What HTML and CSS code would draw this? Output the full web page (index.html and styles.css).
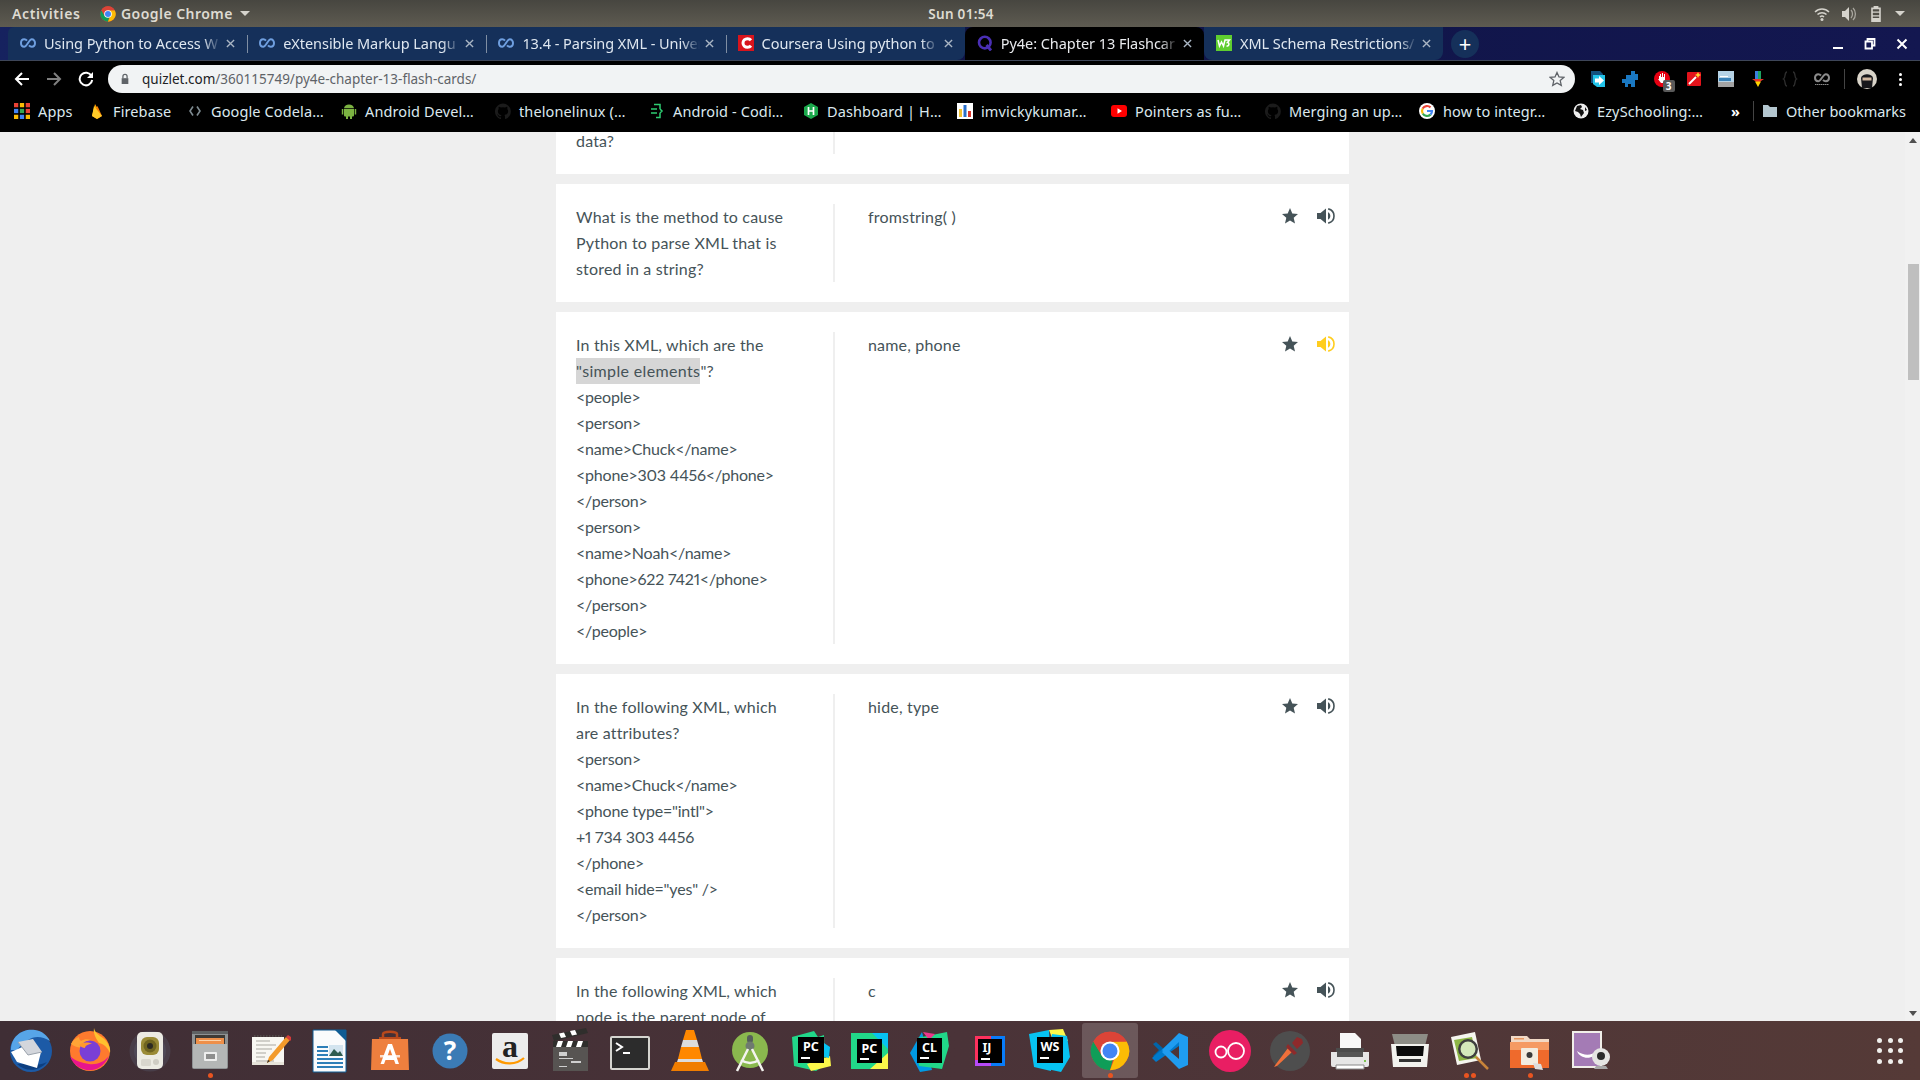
FILE: index.html
```html
<!DOCTYPE html>
<html lang="en">
<head>
<meta charset="utf-8">
<title>Py4e: Chapter 13 Flashcards</title>
<link rel="stylesheet" href="styles.css">
</head>
<body>
<svg class="defs" width="0" height="0">
  <symbol id="co" viewBox="0 0 16 16"><path d="M7 5.600C6.200 4.600 5.200 4.200 4.200 4.200 2.400 4.200 1 5.800 1 8s1.400 3.800 3.200 3.800c2.800 0 4.800-7.600 7.600-7.600C13.600 4.200 15 5.800 15 8s-1.400 3.800-3.200 3.800c-1 0-2-.4-2.800-1.400" fill="none" stroke="currentColor" stroke-width="2"/></symbol>
  <symbol id="gh" viewBox="0 0 16 16"><path fill="currentColor" d="M8 .5a8 8 0 0 0-2.500 15.600c.4.100.5-.2.500-.4v-1.400c-2.200.5-2.700-1-2.700-1-.4-.9-.9-1.200-.9-1.200-.7-.5.100-.5.100-.5.800.1 1.200.8 1.200.8.700 1.200 1.900.9 2.300.7.100-.5.300-.9.500-1.100-1.800-.2-3.600-.9-3.600-4 0-.9.300-1.600.8-2.100-.1-.2-.4-1 .1-2.100 0 0 .7-.2 2.200.8a7.500 7.500 0 0 1 4 0c1.500-1 2.200-.8 2.200-.8.400 1.100.2 1.900.1 2.100.5.600.8 1.300.8 2.100 0 3.100-1.900 3.700-3.700 3.900.3.300.6.800.6 1.500v2.200c0 .2.100.5.600.4A8 8 0 0 0 8 .5z"/></symbol>
  <symbol id="star" viewBox="0 0 16 16"><path fill="currentColor" d="M8 0l2.300 5.400 5.700.5-4.300 3.800 1.300 5.800L8 12.500l-5 3 1.300-5.800L0 5.900l5.700-.5z"/></symbol>
  <symbol id="spk" viewBox="0 0 18 16"><path fill="currentColor" d="M0 5h3.500L9 .5v15L3.500 11H0z"/><path fill="none" stroke="currentColor" stroke-width="1.600" d="M11.200.9c3.600.8 5.800 3.700 5.800 7.100s-2.200 6.300-5.800 7.100"/><path fill="currentColor" d="M11 4.300c1.400.6 2.300 2 2.300 3.700s-.9 3.100-2.300 3.700z"/></symbol>
  <symbol id="chrome" viewBox="0 0 48 48"><circle cx="24" cy="24" r="23" fill="#db4437"/><path fill="#0f9d58" d="M24 47A23 23 0 0 1 4 12.500L15 31l13 1z"/><path fill="#fbbc05" d="M24 47A23 23 0 0 0 44 12.500L24 13l8 13z"/><path fill="#db4437" d="M4 12.500A23 23 0 0 1 44 12.500H24l-9 18z"/><circle cx="24" cy="24" r="11.500" fill="#fff"/><circle cx="24" cy="24" r="9" fill="#4285f4"/></symbol>
  <symbol id="x" viewBox="0 0 10 10"><path stroke="currentColor" stroke-width="1.500" d="M1 1l8 8M9 1l-8 8"/></symbol>
</svg>

<header class="panel">
  <span class="panel-activities">Activities</span>
  <span class="panel-app">
    <svg class="ic14" viewBox="0 0 16 16"><use href="#chrome"/></svg>
    <span>Google Chrome</span>
    <i class="caret"></i>
  </span>
  <span class="panel-clock">Sun 01:54</span>
  <span class="panel-tray">
    <svg class="tray-ic" viewBox="0 0 16 16"><path fill="none" stroke="#d5d3cc" stroke-width="1.500" d="M1 6c4-4 10-4 14 0M3.500 8.500c2.500-2.500 6.500-2.500 9 0M6 11c1.200-1.200 2.800-1.200 4 0"/><circle cx="8" cy="13.500" r="1.500" fill="#d5d3cc"/></svg>
    <svg class="tray-ic" viewBox="0 0 16 16"><path fill="#d5d3cc" d="M1 5h3l4-4v14l-4-4H1z"/><path fill="none" stroke="#a9a79f" stroke-width="1.300" d="M10 4c2 2 2 6 0 8M12 2c3.200 3 3.200 9 0 12"/></svg>
    <svg class="tray-ic" viewBox="0 0 16 20"><path fill="#d5d3cc" d="M5 0h6v2h3v18H2V2h3z"/><path fill="#4f4d46" d="M4 4h8v3H4zM4 8.500h8v3H4zM4 13h8v2H4z"/></svg>
    <i class="caret caret-tray"></i>
  </span>
</header>

<nav class="tabstrip">
  <div class="tab tab-first">
    <svg class="fav co-c"><use href="#co"/></svg>
    <span class="tab-title">Using Python to Access W</span>
    <svg class="tab-x"><use href="#x"/></svg>
  </div>
  <div class="tab tab-sep">
    <svg class="fav co-c"><use href="#co"/></svg>
    <span class="tab-title">eXtensible Markup Langu</span>
    <svg class="tab-x"><use href="#x"/></svg>
  </div>
  <div class="tab tab-sep">
    <svg class="fav co-c"><use href="#co"/></svg>
    <span class="tab-title">13.4 - Parsing XML - Univer</span>
    <svg class="tab-x"><use href="#x"/></svg>
  </div>
  <div class="tab tab-sep tab-before">
    <svg class="fav" viewBox="0 0 16 16"><rect width="16" height="16" fill="#d8141c"/><path fill="none" stroke="#fff" stroke-width="3" d="M13 5.200C12 4 10.800 3.700 9.500 3.700 7 3.700 5 5.500 5 8s2 4.300 4.500 4.300c1.300 0 2.500-.3 3.500-1.500"/></svg>
    <span class="tab-title">Coursera Using python to</span>
    <svg class="tab-x"><use href="#x"/></svg>
  </div>
  <div class="tab tab-active">
    <svg class="fav" viewBox="0 0 16 16"><circle cx="7.800" cy="7.600" r="5.800" fill="none" stroke="#4a2fb5" stroke-width="2.600"/><path stroke="#4a2fb5" stroke-width="2.800" d="M9.500 10l4.500 5.500"/></svg>
    <span class="tab-title">Py4e: Chapter 13 Flashcar</span>
    <svg class="tab-x"><use href="#x"/></svg>
  </div>
  <div class="tab tab-after">
    <svg class="fav" viewBox="0 0 16 16"><rect width="16" height="16" fill="#5fce2f"/><path fill="none" stroke="#fff" stroke-width="1.500" d="M2 5l1.500 6L5.500 7l2 4L9 5h4.500l-2 2.500c2 0 2 4-1 3.500"/></svg>
    <span class="tab-title">XML Schema Restrictions/</span>
    <svg class="tab-x"><use href="#x"/></svg>
  </div>
  <div class="newtab">+</div>
  <div class="winctl">
    <svg class="win-ic" viewBox="0 0 12 12"><path fill="#fff" d="M1 9h10v2H1z"/></svg>
    <svg class="win-ic" viewBox="0 0 12 12"><path fill="none" stroke="#fff" stroke-width="1.800" d="M3.500 3.500V1h7v6.500H8M1.500 3.500h6.500v7H1.500z"/></svg>
    <svg class="win-ic" viewBox="0 0 12 12"><path stroke="#fff" stroke-width="2" d="M1.500 1.500l9 9M10.500 1.500l-9 9"/></svg>
  </div>
</nav>

<div class="toolbar">
  <svg class="tb-ic" viewBox="0 0 16 16"><path fill="none" stroke="#fff" stroke-width="2" d="M15 8H2M8 2L2 8l6 6"/></svg>
  <svg class="tb-ic" viewBox="0 0 16 16"><path fill="none" stroke="#808080" stroke-width="2" d="M1 8h13M8 2l6 6-6 6"/></svg>
  <svg class="tb-ic" viewBox="0 0 16 16"><path fill="none" stroke="#fff" stroke-width="2" d="M13.500 5A6.300 6.300 0 1 0 14.200 9"/><path fill="#fff" d="M15 1v6H9z"/></svg>
  <div class="omnibox">
    <svg class="lock" viewBox="0 0 12 14"><path fill="#5f6368" d="M2 6h8v7H2z"/><path fill="none" stroke="#5f6368" stroke-width="1.500" d="M3.500 6V4a2.500 2.500 0 0 1 5 0v2"/></svg>
    <span class="url"><b>quizlet.com</b>/360115749/py4e-chapter-13-flash-cards/</span>
    <svg class="omni-star" viewBox="0 0 16 16"><path fill="none" stroke="#5f6368" stroke-width="1.300" d="M8 1.500l2 4.500 4.800.4-3.600 3.200 1.100 4.800L8 11.900l-4.300 2.500 1.100-4.800L1.200 6.400 6 6z"/></svg>
  </div>
  <div class="exts">
    <svg class="ext" viewBox="0 0 16 16"><path fill="#14517f" d="M1 0h9l3 3v2H4v7H1z"/><path fill="#22c4ea" d="M3 4h12v12H7l-4-3z"/><path fill="#fff" d="M5 7.500h4V5l5 4.500-5 4.500v-2.500H5z"/></svg>
    <svg class="ext" viewBox="0 0 16 16"><path fill="#1a78c2" d="M9 0h4v3h3v6h-3v7H9v-3H6v3H3v-4H0V8h4V4h5z"/></svg>
    <span class="ext-wrap">
      <svg class="ext" viewBox="0 0 16 16"><circle cx="8" cy="8" r="8" fill="#e60012"/><path fill="#fff" d="M5 5h1V3h1v3h1V2h1v4h1V3h1v6l-1 3H7L4 8h1z"/></svg>
      <span class="ext-badge">3</span>
    </span>
    <svg class="ext" viewBox="0 0 16 16"><rect x="1" y="1" width="14" height="14" rx="1" fill="#e3131b"/><path stroke="#fff" stroke-width="2" d="M3 13l7-7"/><path fill="#ffd233" d="M12 1l1 2 2 1-2 1-1 2-1-2-2-1 2-1z"/></svg>
    <svg class="ext" viewBox="0 0 16 16"><rect width="16" height="16" fill="#b6d3e6"/><rect y="11" width="16" height="5" fill="#a3a3a3"/><rect x="1" y="7" width="12" height="3" fill="#3a82b8"/><path fill="#fff" d="M2 5h8v1H2z"/></svg>
    <svg class="ext" viewBox="0 0 16 16"><path fill="#3b7de0" d="M5 0h3v8H5z"/><path fill="#1da462" d="M8 0h3v8H8z"/><path fill="#e8352b" d="M2 8h12L8 12z"/><path fill="#ffd400" d="M5 10.500h6L8 16z"/></svg>
    <svg class="ext" viewBox="0 0 16 16"><path fill="none" stroke="#2e2e2e" stroke-width="1.300" d="M5 1C2 1 4 7 1.500 8 4 9 2 15 5 15M11 1c3 0 1 6 3.500 7-2.500 1-.5 7-3.500 7"/></svg>
    <svg class="ext ext-co" viewBox="0 0 16 16"><path fill="none" stroke="currentColor" stroke-width="2" d="M7 4.500C6.200 3.600 5.200 3.200 4.200 3.200 2.400 3.200 1 4.800 1 6.800s1.400 3.400 3.200 3.400c2.800 0 4.800-7 7.600-7C13.600 3.200 15 4.800 15 6.800s-1.400 3.400-3.200 3.400c-1 0-2-.4-2.800-1.200"/><path stroke="currentColor" stroke-width="1" stroke-dasharray="1.500 .5" d="M1 13.500h14"/></svg>
    <i class="ext-sep"></i>
    <svg class="avatar" viewBox="0 0 20 20"><circle cx="10" cy="10" r="10" fill="#d9d4c9"/><path fill="#17171b" d="M4 9c1-5 11-5 12 0l-1 10H5z"/><rect x="5.500" y="8.500" width="9" height="3" fill="#d2b89f"/></svg>
    <span class="kebab"><i></i><i></i><i></i></span>
  </div>
</div>

<div class="bookmarks">
  <span class="bm bm-apps"><svg class="fav" viewBox="0 0 15 15"><path fill="#ea4335" d="M0 0h4v4H0z"/><path fill="#fbbc05" d="M5.500 0h4v4h-4z"/><path fill="#ea4335" d="M11 0h4v4h-4z"/><path fill="#4285f4" d="M0 5.500h4v4H0z"/><path fill="#34a853" d="M5.500 5.500h4v4h-4z"/><path fill="#ea4335" d="M11 5.500h4v4h-4z"/><path fill="#fbbc05" d="M0 11h4v4H0z"/><path fill="#4285f4" d="M5.500 11h4v4h-4z"/><path fill="#fbbc05" d="M11 11h4v4h-4z"/></svg>Apps</span>
  <span class="bm bm-fire"><svg class="fav" viewBox="0 0 16 16"><path fill="#ffa000" d="M3 13L6 1l3 5z"/><path fill="#f57c00" d="M3 13L8.500 3 13 13l-5 3z"/><path fill="#ffca28" d="M3 13l2-10 8 10-5 3z"/></svg>Firebase</span>
  <span class="bm"><svg class="fav" viewBox="0 0 16 16"><path fill="none" stroke="#7f8c92" stroke-width="1.600" d="M6 3.500L3 8l3 4.500M10 3.500L13 8l-3 4.500"/></svg>Google Codela…</span>
  <span class="bm"><svg class="fav" viewBox="0 0 16 16"><path fill="#7cb342" d="M3 6h10v6.500a1 1 0 0 1-1 1h-1V16H9v-2.500H7V16H5v-2.500H4a1 1 0 0 1-1-1zM.8 6h1.500v5.500H.8zM13.700 6h1.500v5.500h-1.500zM3 5.200C3.200 3 5.400 1.500 8 1.500s4.800 1.500 5 3.700z"/></svg>Android Devel…</span>
  <span class="bm"><svg class="fav gh-c"><use href="#gh"/></svg>thelonelinux (…</span>
  <span class="bm"><svg class="fav" viewBox="0 0 16 16"><path fill="none" stroke="#2ecc71" stroke-width="1.500" d="M5 1.500h6v4.500M11 10v4.500H7M2 6h6M2 10h6M11 6l2 2-2 2"/></svg>Android - Codi…</span>
  <span class="bm"><svg class="fav" viewBox="0 0 16 16"><path fill="#1ba94c" d="M8 0l7 4v8l-7 4-7-4V4z"/><path stroke="#fff" stroke-width="1.700" d="M5.500 4v8M10.500 4v8M5.500 8h5"/></svg>Dashboard | H…</span>
  <span class="bm"><svg class="fav" viewBox="0 0 16 16"><rect width="16" height="16" fill="#fff"/><rect x="2" y="6" width="3" height="8" fill="#f2c230"/><rect x="6.500" y="2" width="3" height="12" fill="#2a6fc9"/><rect x="11" y="8" width="3" height="6" fill="#d9352b"/></svg>imvickykumar…</span>
  <span class="bm"><svg class="fav" viewBox="0 0 16 16"><rect y="2" width="16" height="12" rx="3" fill="#f00"/><path fill="#fff" d="M6.500 5.300l4.500 2.700-4.500 2.700z"/></svg>Pointers as fu…</span>
  <span class="bm"><svg class="fav gh-c"><use href="#gh"/></svg>Merging an up…</span>
  <span class="bm"><svg class="fav" viewBox="0 0 16 16"><circle cx="8" cy="8" r="8" fill="#fff"/><path fill="none" stroke="#4285f4" stroke-width="2.200" d="M8 8h5a5 5 0 0 1-1.500 3.600"/><path fill="none" stroke="#34a853" stroke-width="2.200" d="M11.500 11.600A5 5 0 0 1 3.700 10.500"/><path fill="none" stroke="#fbbc05" stroke-width="2.200" d="M3.700 10.500a5 5 0 0 1 0-5"/><path fill="none" stroke="#ea4335" stroke-width="2.200" d="M3.700 5.500A5 5 0 0 1 11.500 4.400"/></svg>how to integr…</span>
  <span class="bm"><svg class="fav" viewBox="0 0 16 16"><circle cx="8" cy="8" r="7.500" fill="#eee"/><path fill="#111" d="M4 3l4-1 1 2-2 2 3 1 1 3-3 4-1-3-2-2-3-1zM12 4l2 3-2 1z"/></svg>EzySchooling:…</span>
  <span class="bm-more">»</span>
  <i class="bm-sep"></i>
  <span class="bm bm-other"><svg class="fav" viewBox="0 0 16 16"><path fill="#b3c6cf" d="M1 2h5l2 2h7v10H1z"/></svg>Other bookmarks</span>
</div>

<main class="page">
  <section class="cards">
    <article class="card">
      <div class="term">data?</div>
      <div class="def"></div>
    </article>
    <article class="card">
      <div class="term">What is the method to cause<br>Python to parse XML that is<br>stored in a string?</div>
      <div class="def">fromstring( )</div>
      <div class="actions"><svg class="act-star"><use href="#star"/></svg><svg class="act-spk"><use href="#spk"/></svg></div>
    </article>
    <article class="card">
      <div class="term">In this XML, which are the<br><span class="hl">"simple elements</span>"?<br><span class="xml">&lt;people&gt;<br>&lt;person&gt;<br>&lt;name&gt;Chuck&lt;/name&gt;<br>&lt;phone&gt;303 4456&lt;/phone&gt;<br>&lt;/person&gt;<br>&lt;person&gt;<br>&lt;name&gt;Noah&lt;/name&gt;<br>&lt;phone&gt;622 7421&lt;/phone&gt;<br>&lt;/person&gt;<br>&lt;/people&gt;</span></div>
      <div class="def">name, phone</div>
      <div class="actions"><svg class="act-star"><use href="#star"/></svg><svg class="act-spk act-on"><use href="#spk"/></svg></div>
    </article>
    <article class="card">
      <div class="term">In the following XML, which<br>are attributes?<br><span class="xml">&lt;person&gt;<br>&lt;name&gt;Chuck&lt;/name&gt;<br>&lt;phone type="intl"&gt;<br>+1 734 303 4456<br>&lt;/phone&gt;<br>&lt;email hide="yes" /&gt;<br>&lt;/person&gt;</span></div>
      <div class="def">hide, type</div>
      <div class="actions"><svg class="act-star"><use href="#star"/></svg><svg class="act-spk"><use href="#spk"/></svg></div>
    </article>
    <article class="card">
      <div class="term">In the following XML, which<br>node is the parent node of</div>
      <div class="def">c</div>
      <div class="actions"><svg class="act-star"><use href="#star"/></svg><svg class="act-spk"><use href="#spk"/></svg></div>
    </article>
  </section>
  <aside class="scrollbar">
    <i class="sb-up"></i>
    <i class="sb-thumb"></i>
    <i class="sb-down"></i>
  </aside>
</main>

<footer class="dock">
  <!-- Thunderbird -->
  <div class="dk"><svg viewBox="0 0 50 50"><circle cx="26" cy="25" r="21" fill="#1c5aa6"/><path fill="#57a5e8" d="M6 24C6 10 18 2 30 4c7 1 12 5 15 11-8-5-16-5-22-1-5 3-8 6-11 10z"/><path fill="#0d3f80" d="M12 38c8 8 22 8 30-2-6 3-12 3-16 2z"/><path fill="#fff" d="M6 26l18-8 12 8-4 16-20-6z"/><path fill="#d3d6dc" d="M13 16l15-3 9 13-14 3z"/><path fill="none" stroke="#9aa2ac" stroke-width="1" d="M13 16l10 13 14-3"/></svg></div>
  <!-- Firefox -->
  <div class="dk"><svg viewBox="0 0 50 50"><circle cx="25" cy="25" r="20" fill="#ff7a2e"/><path fill="#ffc12e" d="M29 2c1 5 5 7 9 10 5 4 8 10 7 15-2-5-6-9-11-10-3-5-6-9-5-15z"/><path fill="#ffa436" d="M6 18c2-4 5-6 8-7 0 2 1 3 2 4 3-2 7-2 10-1-4 1-8 3-8 7-4 1-8 0-12-3z"/><path fill="#e8158d" d="M5 30c3 10 13 15 22 14 8-1 14-7 17-14-5 6-12 9-20 8-7-1-14-3-19-8z"/><circle cx="25" cy="25" r="10.500" fill="#7a3fd6"/><path fill="#ff9a2e" d="M14 19c4-3 9-3 13-1-4 0-7 2-7 4-2 0-4-1-6-3z"/></svg></div>
  <!-- Speaker -->
  <div class="dk"><svg viewBox="0 0 50 50"><circle cx="25" cy="25" r="20.500" fill="#5d6577" opacity=".3"/><circle cx="25" cy="25" r="16" fill="#5d6577" opacity=".3"/><rect x="12" y="6" width="26" height="37" rx="5" fill="#ecebe3"/><rect x="16" y="11" width="18" height="18" rx="6" fill="#9a8b36"/><circle cx="25" cy="20" r="6.500" fill="#6f6420"/><circle cx="25" cy="20" r="3" fill="#2c2a22"/><circle cx="31" cy="36" r="3" fill="#cfcdc4"/><rect x="16" y="33" width="10" height="7" rx="1.500" fill="#d8d6cd"/></svg></div>
  <!-- Files -->
  <div class="dk dk-dot"><svg viewBox="0 0 50 50"><rect x="7" y="5" width="36" height="38" rx="2" fill="#8f9294"/><rect x="7" y="5" width="36" height="3" fill="#5f6163"/><rect x="10" y="9" width="30" height="9" fill="#3e3a36"/><rect x="11" y="12" width="28" height="6" fill="#ee8f4a"/><rect x="14" y="14" width="22" height="1" fill="#fbd3ac"/><rect x="8" y="18" width="34" height="24" fill="#b4b6b6"/><rect x="19" y="26" width="13" height="9" rx="1" fill="#eeeeee"/><rect x="21" y="28" width="9" height="5" fill="#8e8e8e"/></svg></div>
  <!-- Notes -->
  <div class="dk"><svg viewBox="0 0 50 50"><rect x="7" y="11" width="32" height="28" fill="#e7e4da"/><path fill="#f8f7f2" d="M7 11h32v25H7z"/><path fill="none" stroke="#55534e" stroke-width="1.500" stroke-dasharray="1.500 1.500" d="M9 10h28"/><path fill="none" stroke="#a9a7a0" stroke-width="1" d="M11 15h14M11 19h20M11 23h16M11 27h10M11 31h9M11 35h18"/><path fill="#f39b2b" d="M41 11l4 3-17 20-6 3 2-6z"/><path fill="#d63a3a" d="M41 11l2-2 3 2 0 3-1 1z"/><path fill="#2b2b2b" d="M22 37l1-3 2 1z"/></svg></div>
  <!-- Writer -->
  <div class="dk"><svg viewBox="0 0 50 50"><path fill="#fafbfc" stroke="#0f5c94" stroke-width="1" d="M8 4h33v42H8z"/><path fill="#0f5c94" d="M30 4h11v11z"/><path fill="#2e7fb8" d="M12 20h11v2H12zM12 24h11v2H12zM12 28h11v2H12zM12 32h26v2H12zM12 36h26v2H12zM12 40h26v2H12z"/><path fill="#d3e4ef" d="M24 19h14v11H24z"/><path fill="#2f5d50" d="M24 30l5-7 4 4 2-2 3 5z"/></svg></div>
  <!-- Store -->
  <div class="dk"><svg viewBox="0 0 50 50"><path fill="none" stroke="#b9491c" stroke-width="2.500" d="M18 13V8c0-3 14-3 14 0v5"/><path fill="#b9491c" d="M14 11h22v3H14z"/><path fill="#ee7f3e" d="M7 13h36l1 31H6z"/><path fill="#fff" d="M23 18h4l7 20h-3.500l-1.500-4h-8.500L19 38h-3.500zM22.500 30h5L25 23z"/><rect x="15" y="29" width="20" height="2.500" fill="#fff" opacity=".75"/></svg></div>
  <!-- Help -->
  <div class="dk"><svg viewBox="0 0 50 50"><circle cx="25" cy="25" r="17.500" fill="#3b7bb5"/><text x="25" y="34" class="dk-q">?</text></svg></div>
  <!-- Amazon -->
  <div class="dk"><svg viewBox="0 0 50 50"><rect x="7" y="7" width="36" height="36" rx="2" fill="#ececec"/><text x="25" y="31" class="dk-a">a</text><path fill="none" stroke="#f90" stroke-width="2.200" d="M11 33c8 6 20 6 28-1"/></svg></div>
  <!-- Clapper -->
  <div class="dk"><svg viewBox="0 0 50 50"><rect x="8" y="20" width="35" height="25" fill="#575452"/><path fill="#2f2e2c" d="M8 15h35v6H8z"/><path fill="#fff" d="M13 15h5l-2 6h-5zM23 15h5l-2 6h-5zM33 15h5l-2 6h-5z"/><path fill="#2f2e2c" d="M7 9l34-7 2 5-34 8z"/><path fill="#fff" d="M14 7.500l5-1 2 4.500-5 1zM25 5l5-1 2 4.500-5 1z"/><path fill="#cfcfcf" d="M14 26h8v4h-8zM14 32h14v1H14zM26 35h10v2H26zM14 40h8v1H14z"/></svg></div>
  <!-- Terminal -->
  <div class="dk"><svg viewBox="0 0 50 50"><rect x="5" y="10" width="40" height="34" rx="2" fill="#d5d5d0"/><rect x="7" y="12" width="36" height="30" fill="#2c2c2c"/><path fill="none" stroke="#fff" stroke-width="2" d="M11 17l6 4-6 4M18 27h7"/></svg></div>
  <!-- VLC -->
  <div class="dk"><svg viewBox="0 0 50 50"><path fill="#ff8800" d="M21 4h8l3 10H18zM16 21h18l3 12H13z"/><path fill="#dcdcdc" d="M18 14h14l2 7H16zM13 33h24l1 3H12z"/><path fill="#f07d00" d="M10 36h30l4 9H6z"/></svg></div>
  <!-- Android Studio -->
  <div class="dk"><svg viewBox="0 0 50 50"><circle cx="25" cy="24" r="18" fill="#8ab84e"/><rect x="22" y="9" width="6" height="8" rx="3" fill="#55605a"/><circle cx="25" cy="20" r="4.500" fill="#6e7a70"/><path fill="none" stroke="#f4f4f0" stroke-width="2.500" d="M23 23L12 45M27 23l11 22M16 34c6 4 12 4 18 0"/></svg></div>
  <!-- PyCharm -->
  <div class="dk"><svg viewBox="0 0 50 50"><path fill="#21d789" d="M7 11L29 5l4 6 6-2 1 30-9 6-22-5z"/><path fill="#fcf84a" d="M22 38l23-8 1 10-20 5z"/><path fill="#07c3f2" d="M36 15l9 6-1 11-8-2z"/><rect x="13" y="11" width="26" height="26" fill="#000"/><text x="26" y="25" class="jb">PC</text><rect x="16" y="31" width="9" height="2" fill="#fff"/></svg></div>
  <!-- PyCharm Edu -->
  <div class="dk"><svg viewBox="0 0 50 50"><rect x="6" y="7" width="37" height="36" fill="#21d789"/><path fill="#07c3f2" d="M27 7h16v16z"/><path fill="#fcf84a" d="M25 43l18-16v16z"/><rect x="12" y="13" width="25" height="24" fill="#000"/><text x="24.500" y="27" class="jb">PC</text><rect x="15" y="32" width="9" height="2" fill="#fff"/></svg></div>
  <!-- CLion -->
  <div class="dk"><svg viewBox="0 0 50 50"><path fill="#009ae5" d="M5 27L17 6l10 38-12 2z"/><path fill="#21d789" d="M12 12l30-6 2 14-7 23-23-3z"/><path fill="#ed358c" d="M18 6l12 2-6 6z"/><rect x="12" y="12" width="25" height="25" fill="#000"/><text x="24.500" y="26" class="jb">CL</text><rect x="15" y="31" width="9" height="2" fill="#fff"/></svg></div>
  <!-- IntelliJ -->
  <div class="dk"><svg viewBox="0 0 50 50"><path fill="#fe315d" d="M10 10h16v6H16v18h-6z"/><path fill="#087cfa" d="M26 10h14v30H26z"/><path fill="#b74af7" d="M10 34h16v6H10z"/><rect x="13" y="13" width="24" height="24" fill="#000"/><text x="22" y="26" class="jb">IJ</text><rect x="16" y="32" width="9" height="2" fill="#fff"/></svg></div>
  <!-- WebStorm -->
  <div class="dk"><svg viewBox="0 0 50 50"><path fill="#07c3f2" d="M4 8l20-4 2 41-17-4z"/><path fill="#fcf84a" d="M24 4l14-1 5 12-14 2z"/><path fill="#07c3f2" d="M27 8l15 2 3 21-9 15-14-3z"/><rect x="12" y="11" width="26" height="26" fill="#000"/><text x="25" y="25" class="jb">WS</text><rect x="15" y="31" width="9" height="2" fill="#fff"/></svg></div>
  <!-- Chrome -->
  <div class="dk dk-dot dk-on"><svg class="dk-chrome" viewBox="0 0 48 48"><use href="#chrome"/></svg></div>
  <!-- VS Code -->
  <div class="dk"><svg viewBox="0 0 50 50"><path fill="#0065a9" d="M8 18l3-2 9 8-9 8-3-2 6-6z"/><path fill="#007acc" d="M7 32l24-21 3 3v6L11 36z"/><path fill="#1f9cf0" d="M34 7l9 4v28l-9 4-17-17 4-4 13 11V16L21 28l-4-4z"/></svg></div>
  <!-- oO -->
  <div class="dk"><svg viewBox="0 0 50 50"><circle cx="25" cy="25" r="21" fill="#e91e63"/><circle cx="16" cy="26" r="5.500" fill="none" stroke="#fff" stroke-width="1.800"/><circle cx="31" cy="25" r="8" fill="none" stroke="#fff" stroke-width="1.800"/></svg></div>
  <!-- Color picker -->
  <div class="dk"><svg viewBox="0 0 50 50"><circle cx="25" cy="25" r="20" fill="#4e4e4e"/><path fill="#f0703a" d="M11 38l-2 3 3-1 15-14-4-4z"/><path fill="#8e2a2b" d="M23 18l9 9-3 2-8-8zM27 17l5-6 5 2 1 4-6 6z"/></svg></div>
  <!-- Printer -->
  <div class="dk"><svg viewBox="0 0 50 50"><path fill="#f7f7f7" d="M15 7h15l6 6v14H15z"/><path fill="#4b4b4b" d="M11 22h28v10H11z"/><path fill="#e6e6e6" d="M6 26h38v13a2 2 0 0 1-2 2H8a2 2 0 0 1-2-2z"/><path fill="#555" d="M12 26h26v5H12z"/><path fill="#fff" stroke="#888" d="M11 39h28v4H11z"/><rect x="39" y="34" width="2" height="2" fill="#7bc24f"/></svg></div>
  <!-- Scanner -->
  <div class="dk"><svg viewBox="0 0 50 50"><path fill="#8d8d86" d="M7 8h36l-3 12H10z"/><path fill="#f2f2ee" d="M6 18h38l-2 23H8z"/><path fill="#0b0b0b" d="M11 20h28l-1 10H12z"/><path fill="#333" d="M14 33h22v3H14z"/></svg></div>
  <!-- Image viewer -->
  <div class="dk dk-dot2"><svg viewBox="0 0 50 50"><path fill="#f5f5ee" d="M6 11l24-5 6 28-24 5z"/><path fill="#8db645" d="M9 14l18-3 5 21-18 3z"/><circle cx="23" cy="23" r="10" fill="#3f3f3f"/><circle cx="23" cy="23" r="7.500" fill="#d4e8bb"/><path stroke="#c8843a" stroke-width="2.500" d="M31 31l12 12"/></svg></div>
  <!-- Folder -->
  <div class="dk dk-dot"><svg viewBox="0 0 50 50"><path fill="#f2d9c5" d="M6 10h16l3 3h19v6H6z"/><rect x="9" y="12" width="10" height="1.500" fill="#e8975f"/><path fill="#ef6a2c" d="M5 16h39v26H5z"/><path fill="#f59a63" d="M5 16h39v8H5z"/><rect x="16" y="22" width="17" height="17" rx="1" fill="#f2ece0"/><circle cx="24.500" cy="29" r="3" fill="#3a3a3a"/><path fill="#ddd" d="M28 37l8 1 2 6-8-1z"/></svg></div>
  <!-- Cheese -->
  <div class="dk"><svg viewBox="0 0 50 50"><rect x="7" y="5" width="30" height="37" fill="#f1efe9"/><rect x="9" y="7" width="26" height="33" fill="#a47bb5"/><path fill="#fff" d="M12 25c7 5 14 5 20 0-2 9-17 9-20 0z"/><circle cx="36" cy="31" r="9" fill="#e5e5e3"/><circle cx="36" cy="30" r="4" fill="#2b2b2b"/><path fill="#a8a8a8" d="M31 40h10l2 3H29z"/></svg></div>
  <div class="dk-grid">
    <i></i><i></i><i></i><i></i><i></i><i></i><i></i><i></i><i></i>
  </div>
</footer>
</body>
</html>
```

FILE: styles.css
```css
* { box-sizing: border-box; }
html, body { margin: 0; height: 100%; }
body {
  display: flex;
  flex-direction: column;
  height: 100vh;
  overflow: hidden;
  background: #000;
  font-family: "Noto Sans", "Open Sans", sans-serif;
}
i { display: block; font-style: normal; }
svg { display: block; flex: none; }
.defs { position: absolute; }

/* GNOME top bar */
.panel {
  position: relative;
  flex: 0 0 27px;
  display: flex;
  align-items: center;
  padding: 0 12px;
  background: linear-gradient(#474640, #5e5b51);
  color: #dedbd2;
  font-size: 14px;
  font-weight: 600;
}
.panel-activities { width: 88px; letter-spacing: .6px; }
.panel-app { display: flex; align-items: center; gap: 5px; letter-spacing: .45px; }
.ic14 { width: 16px; height: 16px; }
.caret {
  width: 0;
  height: 0;
  margin-left: 2px;
  border-left: 5px solid transparent;
  border-right: 5px solid transparent;
  border-top: 5px solid #d5d3cc;
}
.caret-tray { margin-left: 0; }
.panel-clock { position: absolute; left: 961px; transform: translateX(-50%); font-size: 13.500px; letter-spacing: .3px; }
.panel-tray { margin-left: auto; display: flex; align-items: center; gap: 11px; padding-right: 3px; }
.tray-ic { width: 16px; height: 16px; }

/* Tab strip */
.tabstrip {
  flex: 0 0 33px;
  display: flex;
  padding-left: 8px;
  background: linear-gradient(90deg, #16225f, #0f1444 40%, #131750);
  border-bottom: 1px solid #3e4658;
  color: #dfe7f0;
  font-size: 14.500px;
}
.tab {
  position: relative;
  width: 239.200px;
  height: 33px;
  display: flex;
  align-items: center;
  gap: 8px;
  padding: 0 9px 1px 12px;
  background: #15305a;
  flex: none;
}
.tab-sep::before {
  content: "";
  position: absolute;
  left: 0;
  top: 8px;
  height: 18px;
  width: 1px;
  background: #7f8ea3;
}
.tab-before { border-bottom-right-radius: 8px; }
.tab-after { border-bottom-left-radius: 8px; border-bottom-right-radius: 8px; }
.tab-first { border-top-left-radius: 6px; }
.tab-active { background: #000; border-radius: 8px 8px 0 0; color: #e8eaed; }
.fav { width: 16px; height: 16px; }
.co-c { color: #6f9fe0; }
.gh-c { color: #1b1b1b; }
.tab-title {
  flex: 1;
  min-width: 0;
  margin-right: -6px;
  white-space: nowrap;
  overflow: hidden;
  letter-spacing: -.05px;
  -webkit-mask-image: linear-gradient(90deg, #000 90%, transparent);
  mask-image: linear-gradient(90deg, #000 90%, transparent);
}
.tab-x { width: 9px; height: 9px; margin: 0 3px; color: #aab6c4; }
.newtab {
  width: 28px;
  height: 28px;
  margin: 3px 0 0 8px;
  border-radius: 50%;
  background: #15305a;
  color: #fff;
  font-size: 22px;
  line-height: 26px;
  text-align: center;
}
.winctl { margin-left: auto; display: flex; align-items: center; gap: 20px; padding-right: 12px; }
.win-ic { width: 12px; height: 12px; }

/* Toolbar */
.toolbar {
  flex: 0 0 36px;
  display: flex;
  align-items: center;
  gap: 16px;
  padding: 0 0 0 14px;
  background: #000;
}
.tb-ic { width: 16px; height: 16px; }
.omnibox {
  width: 1467px;
  height: 28px;
  margin-left: -2px;
  display: flex;
  align-items: center;
  padding: 0 10px 0 12px;
  border-radius: 14px;
  background: #f1f3f4;
}
.lock { width: 10px; height: 12px; }
.url { margin-left: 12px; font-size: 13.500px; color: #5f6368; }
.url b { font-weight: 400; color: #202124; }
.omni-star { margin-left: auto; width: 16px; height: 16px; }
.exts { display: flex; align-items: center; gap: 16px; margin-left: -1.500px; }
.ext { width: 16px; height: 16px; }
.ext-co { color: #8b8b8b; }
.ext-wrap { position: relative; }
.ext-badge {
  position: absolute;
  left: 9px;
  top: 9px;
  width: 12px;
  height: 12px;
  border-radius: 2px;
  background: #5a5a5a;
  color: #fff;
  font-size: 10px;
  font-weight: 700;
  line-height: 12px;
  text-align: center;
}
.ext-sep { width: 1px; height: 20px; margin-left: -1.500px; background: #444; }
.avatar { width: 20px; height: 20px; margin-left: -4px; }
.kebab { display: flex; flex-direction: column; gap: 2px; margin-left: 5.500px; }
.kebab i { width: 3px; height: 3px; border-radius: 50%; background: #fff; }

/* Bookmarks */
.bookmarks {
  flex: 0 0 35px;
  display: flex;
  align-items: center;
  padding: 0 0 8px 14px;
  background: #000;
  color: #dbe8ee;
  font-size: 14.500px;
  white-space: nowrap;
}
.bm { flex: 0 0 154px; display: flex; align-items: center; gap: 8px; letter-spacing: .12px; }
.bm-apps { flex-basis: 75px; }
.bm-fire { flex-basis: 98px; }
.bm-more { width: 20px; margin-left: 4px; font-weight: 700; color: #fff; }
.bm-sep { width: 1px; height: 20px; margin-left: 2px; background: #444; }
.bm-other { flex-basis: auto; margin-left: 8px; letter-spacing: 0; }

/* Page */
.page {
  flex: 1;
  min-height: 0;
  display: flex;
  overflow: hidden;
  background: #efefef;
}
.cards {
  width: 793px;
  margin: -24px 0 0 556px;
  display: flex;
  flex-direction: column;
  gap: 10px;
  font-family: "Lato", sans-serif;
  font-size: 16px;
  line-height: 26px;
  letter-spacing: .18px;
  color: #455358;
}
.card {
  display: flex;
  flex: none;
  padding: 20px 14px 20px 20px;
  background: #fff;
}
.term { width: 259px; padding-right: 20px; border-right: 2px solid #efefef; flex: none; }
.xml { letter-spacing: -.2px; font-feature-settings: "pnum"; }
.hl { background: #d6d6d6; display: inline-block; letter-spacing: .35px; }
.def { flex: 1; padding-left: 33px; }
.actions { display: flex; gap: 19px; padding-top: 4px; color: #455358; }
.act-star { width: 16px; height: 16px; }
.act-spk { width: 18px; height: 16px; }
.act-on { color: #ffcd1f; }

.scrollbar {
  margin-left: auto;
  width: 15px;
  display: flex;
  flex-direction: column;
  align-items: center;
  background: #f1f1f1;
}
.sb-up, .sb-down {
  width: 0;
  height: 0;
  border-left: 4px solid transparent;
  border-right: 4px solid transparent;
}
.sb-up { margin-top: 6px; border-bottom: 5px solid #505050; }
.sb-thumb { width: 11px; height: 116px; margin: 121px 0 0 1px; background: #bfbfbf; }
.sb-down { margin-top: auto; margin-bottom: 5px; border-top: 5px solid #505050; }

/* Dock */
.dock {
  position: relative;
  flex: 0 0 59px;
  display: flex;
  align-items: center;
  background: linear-gradient(90deg, #3f2e35, #4a3338 50%, #553a37);
  z-index: 1;
}
.dk {
  position: relative;
  flex: 0 0 60px;
  height: 55px;
  display: flex;
  align-items: center;
  justify-content: center;
}
.dk svg { width: 50px; height: 50px; }
.dk .dk-chrome { width: 40px; height: 40px; }
.dk-on { flex-basis: 56px; margin: 0 2px; background: rgba(255, 255, 255, .18); border-radius: 3px; }
.dk-dot::after, .dk-dot2::after {
  content: "";
  position: absolute;
  left: 50%;
  bottom: 0;
  width: 5px;
  height: 5px;
  margin-left: -2.500px;
  border-radius: 50%;
  background: #e95420;
}
.dk-dot2::after { margin-left: -6px; box-shadow: 7px 0 #e95420; }
.dk-grid {
  margin-left: auto;
  margin-right: 17px;
  display: grid;
  grid-template-columns: repeat(3, 5px);
  gap: 5.500px;
}
.dk-grid i { width: 5px; height: 5px; border-radius: 50%; background: #f0efec; }
.dk-q { fill: #fff; font: 700 26px "Noto Sans", sans-serif; text-anchor: middle; }
.dk-a { fill: #222; font: 700 32px "Liberation Serif", serif; text-anchor: middle; }
.jb { fill: #fff; font: 700 12.500px "Noto Sans", sans-serif; text-anchor: middle; }
```
